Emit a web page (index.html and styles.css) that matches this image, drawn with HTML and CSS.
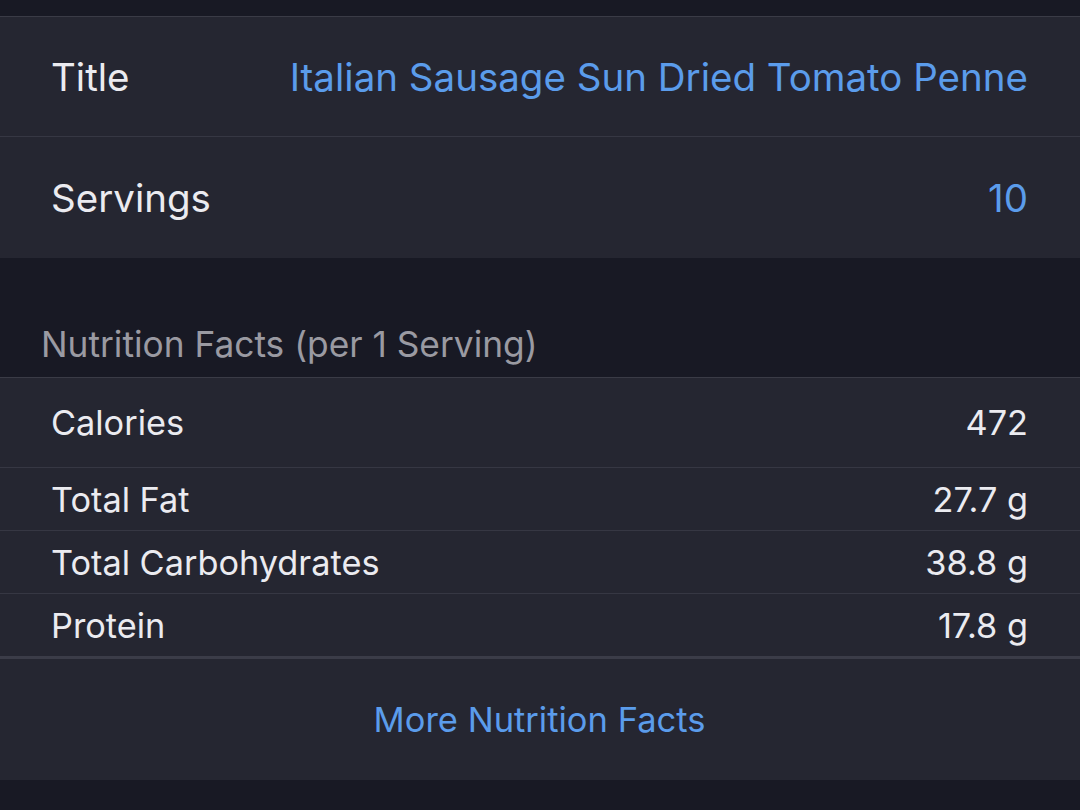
FILE: index.html
```html
<!DOCTYPE html>
<html>
<head>
<meta charset="utf-8">
<link rel="stylesheet" href="styles.css">
</head>
<body>
<div class="screen">
  <div class="top-band"></div>
  <section class="group">
    <div class="row big">
      <span class="label">Title</span>
      <span class="value link">Italian Sausage Sun Dried Tomato Penne</span>
    </div>
    <div class="row big">
      <span class="label">Servings</span>
      <span class="value link">10</span>
    </div>
  </section>
  <div class="section-header">Nutrition Facts (per 1 Serving)</div>
  <section class="group">
    <div class="row cal">
      <span class="label">Calories</span>
      <span class="value">472</span>
    </div>
    <div class="row small">
      <span class="label">Total Fat</span>
      <span class="value">27.7 g</span>
    </div>
    <div class="row small">
      <span class="label">Total Carbohydrates</span>
      <span class="value">38.8 g</span>
    </div>
    <div class="row small">
      <span class="label">Protein</span>
      <span class="value">17.8 g</span>
    </div>
    <div class="row more">
      <span class="link">More Nutrition Facts</span>
    </div>
  </section>
</div>
</body>
</html>
```
FILE: styles.css
```css
html, body {
  margin: 0;
  padding: 0;
  background: #181924;
}
.screen {
  width: 1080px;
  height: 810px;
  overflow: hidden;
  background: #181924;
  font-family: Inter, "Liberation Sans", sans-serif;
  color: #ebebf0;
}
.top-band {
  height: 16px;
}
.group {
  background: #252631;
  border-top: 1px solid #3a3b46;
}
.row {
  display: flex;
  justify-content: space-between;
  align-items: center;
  padding: 0 52px 0 51px;
  border-bottom: 1px solid #363743;
  box-sizing: border-box;
}
.row:last-child {
  border-bottom: none;
}
.row.big {
  height: 121px;
  font-size: 38.5px;
}
.row.big:first-child {
  height: 120px;
}
.row.cal {
  height: 90px;
  font-size: 34.3px;
}
.row.small {
  height: 63px;
  font-size: 34.3px;
}
.row.small:nth-last-child(2) {
  border-bottom: 3px solid #3b3c48;
  height: 65px;
}
.row.more {
  height: 121px;
  justify-content: center;
  font-size: 34.5px;
}
.link {
  color: #5b9ceb;
}
.label, .value {
  white-space: nowrap;
}
.section-header {
  height: 119px;
  box-sizing: border-box;
  display: flex;
  align-items: flex-end;
  padding: 0 42px 11px 41px;
  font-size: 35.3px;
  color: #9a9aa2;
}
```
